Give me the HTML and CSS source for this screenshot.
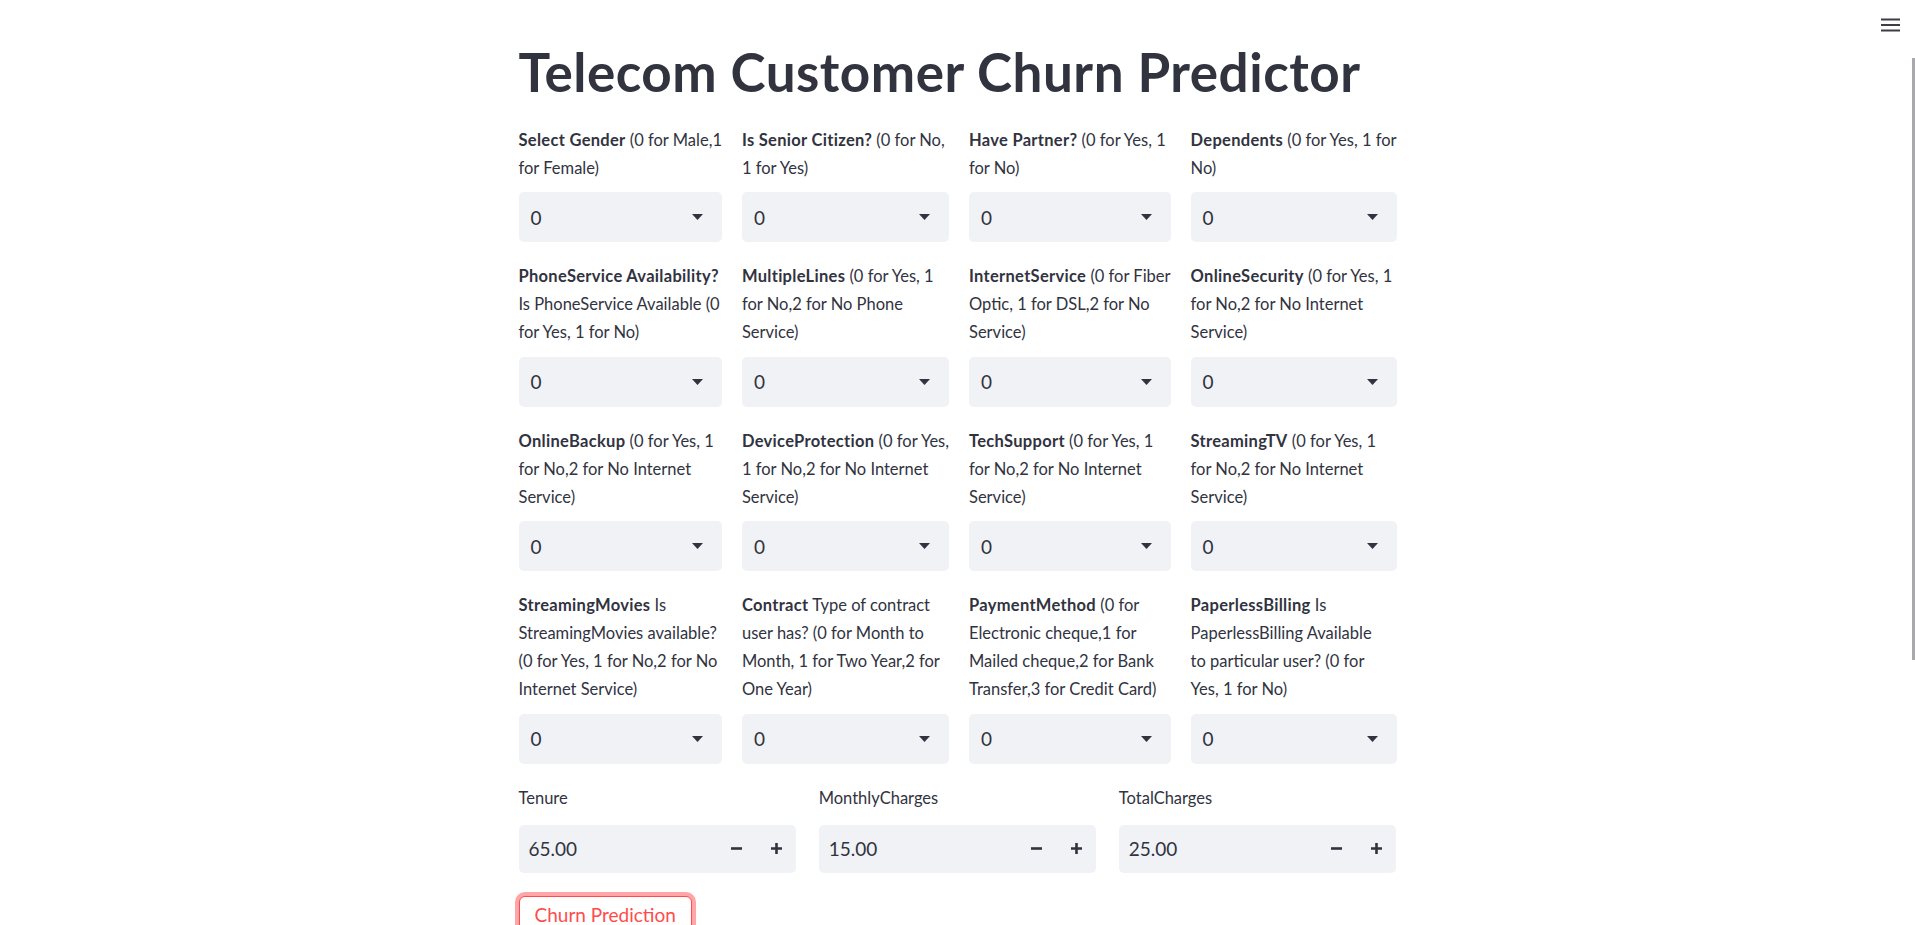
FILE: index.html
```html
<!DOCTYPE html>
<html lang="en">
<head>
<meta charset="utf-8">
<title>Telecom Customer Churn Predictor</title>
<link rel="stylesheet" href="styles.css">
</head>
<body>
<header class="topbar">
  <button class="menu" aria-label="Main menu">
    <svg width="19" height="14" viewBox="0 0 19 14"><path d="M0 1.5h19M0 7h19M0 12.5h19" stroke="#3d3d48" stroke-width="1.8" fill="none"/></svg>
  </button>
</header>
<div class="scroll-thumb"></div>
<main class="block">
  <h1 class="title">Telecom Customer Churn Predictor</h1>

  <section class="grid4">
    <div class="field"><p class="label"><b>Select Gender</b> (0 for Male,1<br>for Female)</p><div class="select"><span>0</span><svg class="caret" width="11" height="6" viewBox="0 0 11 6"><path d="M0 0h11L5.5 6z"/></svg></div></div>
    <div class="field"><p class="label"><b>Is Senior Citizen?</b> (0 for No,<br>1 for Yes)</p><div class="select"><span>0</span><svg class="caret" width="11" height="6" viewBox="0 0 11 6"><path d="M0 0h11L5.5 6z"/></svg></div></div>
    <div class="field"><p class="label"><b>Have Partner?</b> (0 for Yes, 1<br>for No)</p><div class="select"><span>0</span><svg class="caret" width="11" height="6" viewBox="0 0 11 6"><path d="M0 0h11L5.5 6z"/></svg></div></div>
    <div class="field"><p class="label"><b>Dependents</b> (0 for Yes, 1 for<br>No)</p><div class="select"><span>0</span><svg class="caret" width="11" height="6" viewBox="0 0 11 6"><path d="M0 0h11L5.5 6z"/></svg></div></div>

    <div class="field"><p class="label"><b>PhoneService Availability?</b><br>Is PhoneService Available (0<br>for Yes, 1 for No)</p><div class="select"><span>0</span><svg class="caret" width="11" height="6" viewBox="0 0 11 6"><path d="M0 0h11L5.5 6z"/></svg></div></div>
    <div class="field"><p class="label"><b>MultipleLines</b> (0 for Yes, 1<br>for No,2 for No Phone<br>Service)</p><div class="select"><span>0</span><svg class="caret" width="11" height="6" viewBox="0 0 11 6"><path d="M0 0h11L5.5 6z"/></svg></div></div>
    <div class="field"><p class="label"><b>InternetService</b> (0 for Fiber<br>Optic, 1 for DSL,2 for No<br>Service)</p><div class="select"><span>0</span><svg class="caret" width="11" height="6" viewBox="0 0 11 6"><path d="M0 0h11L5.5 6z"/></svg></div></div>
    <div class="field"><p class="label"><b>OnlineSecurity</b> (0 for Yes, 1<br>for No,2 for No Internet<br>Service)</p><div class="select"><span>0</span><svg class="caret" width="11" height="6" viewBox="0 0 11 6"><path d="M0 0h11L5.5 6z"/></svg></div></div>

    <div class="field"><p class="label"><b>OnlineBackup</b> (0 for Yes, 1<br>for No,2 for No Internet<br>Service)</p><div class="select"><span>0</span><svg class="caret" width="11" height="6" viewBox="0 0 11 6"><path d="M0 0h11L5.5 6z"/></svg></div></div>
    <div class="field"><p class="label"><b>DeviceProtection</b> (0 for Yes,<br>1 for No,2 for No Internet<br>Service)</p><div class="select"><span>0</span><svg class="caret" width="11" height="6" viewBox="0 0 11 6"><path d="M0 0h11L5.5 6z"/></svg></div></div>
    <div class="field"><p class="label"><b>TechSupport</b> (0 for Yes, 1<br>for No,2 for No Internet<br>Service)</p><div class="select"><span>0</span><svg class="caret" width="11" height="6" viewBox="0 0 11 6"><path d="M0 0h11L5.5 6z"/></svg></div></div>
    <div class="field"><p class="label"><b>StreamingTV</b> (0 for Yes, 1<br>for No,2 for No Internet<br>Service)</p><div class="select"><span>0</span><svg class="caret" width="11" height="6" viewBox="0 0 11 6"><path d="M0 0h11L5.5 6z"/></svg></div></div>

    <div class="field"><p class="label"><b>StreamingMovies</b> Is<br>StreamingMovies available?<br>(0 for Yes, 1 for No,2 for No<br>Internet Service)</p><div class="select"><span>0</span><svg class="caret" width="11" height="6" viewBox="0 0 11 6"><path d="M0 0h11L5.5 6z"/></svg></div></div>
    <div class="field"><p class="label"><b>Contract</b> Type of contract<br>user has? (0 for Month to<br>Month, 1 for Two Year,2 for<br>One Year)</p><div class="select"><span>0</span><svg class="caret" width="11" height="6" viewBox="0 0 11 6"><path d="M0 0h11L5.5 6z"/></svg></div></div>
    <div class="field"><p class="label"><b>PaymentMethod</b> (0 for<br>Electronic cheque,1 for<br>Mailed cheque,2 for Bank<br>Transfer,3 for Credit Card)</p><div class="select"><span>0</span><svg class="caret" width="11" height="6" viewBox="0 0 11 6"><path d="M0 0h11L5.5 6z"/></svg></div></div>
    <div class="field"><p class="label"><b>PaperlessBilling</b> Is<br>PaperlessBilling Available<br>to particular user? (0 for<br>Yes, 1 for No)</p><div class="select"><span>0</span><svg class="caret" width="11" height="6" viewBox="0 0 11 6"><path d="M0 0h11L5.5 6z"/></svg></div></div>
  </section>

  <section class="grid3">
    <div class="field"><p class="label nlabel">Tenure</p>
      <div class="num"><span class="val">65.00</span>
        <span class="step"><svg width="11" height="11" viewBox="0 0 11 11"><path d="M0 5.5h11" stroke="#31333F" stroke-width="2.6"/></svg></span>
        <span class="step"><svg width="11" height="11" viewBox="0 0 11 11"><path d="M0 5.5h11M5.5 0v11" stroke="#31333F" stroke-width="2.6"/></svg></span>
      </div></div>
    <div class="field"><p class="label nlabel">MonthlyCharges</p>
      <div class="num"><span class="val">15.00</span>
        <span class="step"><svg width="11" height="11" viewBox="0 0 11 11"><path d="M0 5.5h11" stroke="#31333F" stroke-width="2.6"/></svg></span>
        <span class="step"><svg width="11" height="11" viewBox="0 0 11 11"><path d="M0 5.5h11M5.5 0v11" stroke="#31333F" stroke-width="2.6"/></svg></span>
      </div></div>
    <div class="field"><p class="label nlabel">TotalCharges</p>
      <div class="num"><span class="val">25.00</span>
        <span class="step"><svg width="11" height="11" viewBox="0 0 11 11"><path d="M0 5.5h11" stroke="#31333F" stroke-width="2.6"/></svg></span>
        <span class="step"><svg width="11" height="11" viewBox="0 0 11 11"><path d="M0 5.5h11M5.5 0v11" stroke="#31333F" stroke-width="2.6"/></svg></span>
      </div></div>
  </section>

  <button class="btn">Churn Prediction</button>
</main>
</body>
</html>
```
FILE: styles.css
```css
html, body {
  margin: 0;
  height: 100%;
  overflow: hidden;
}
body {
  font-family: Lato, "Noto Sans", sans-serif;
  color: #31333F;
  background: #ffffff;
}
.topbar {
  position: fixed;
  top: 0;
  right: 0;
  z-index: 2;
}
.menu {
  position: absolute;
  top: 18px;
  right: 15px;
  padding: 0;
  border: 0;
  background: none;
  line-height: 0;
}
.scroll-thumb {
  position: fixed;
  right: 0;
  top: 58px;
  width: 3px;
  height: 602px;
  background: #a9a9ad;
}
.block {
  width: 878px;
  margin: 0 auto;
  padding-top: 40px;
  display: flex;
  flex-direction: column;
  gap: 20px;
}
.title {
  margin: 0 0 2px;
  font-size: 53px;
  line-height: 1.2;
  font-weight: 700;
  letter-spacing: 0.5px;
  color: #31333F;
}
.grid4 {
  display: grid;
  grid-template-columns: repeat(4, 1fr);
  gap: 20px;
}
.grid3 {
  display: grid;
  grid-template-columns: repeat(3, 1fr);
  gap: 20px 22.5px;
}
.field {
  display: flex;
  flex-direction: column;
}
.label {
  flex: 1;
  margin: 0 0 10.5px;
  font-size: 16.5px;
  line-height: 28px;
  white-space: nowrap;
}
.label b {
  font-weight: 700;
  letter-spacing: 0.3px;
}
.nlabel {
  margin-bottom: 13px;
}
.select {
  height: 50px;
  box-sizing: border-box;
  background: #F0F2F6;
  border-radius: 5px;
  display: flex;
  align-items: center;
  justify-content: space-between;
  padding: 0 19px 0 12px;
  font-size: 19px;
}
.caret {
  fill: #31333F;
}
.num {
  height: 48px;
  background: #F0F2F6;
  border-radius: 5px;
  display: flex;
  align-items: center;
  padding-left: 10px;
  font-size: 19px;
}
.val {
  flex: 1;
}
.step {
  width: 40px;
  height: 48px;
  display: flex;
  align-items: center;
  justify-content: center;
}
.btn {
  align-self: flex-start;
  margin-top: 3px;
  padding: 2px 15px;
  font-family: inherit;
  font-size: 19px;
  line-height: 32px;
  color: #FF4B4B;
  background: #ffffff;
  border: 1px solid #FF4B4B;
  border-radius: 6px;
  box-shadow: 0 0 0 4px rgba(255, 75, 75, 0.5);
}
```
